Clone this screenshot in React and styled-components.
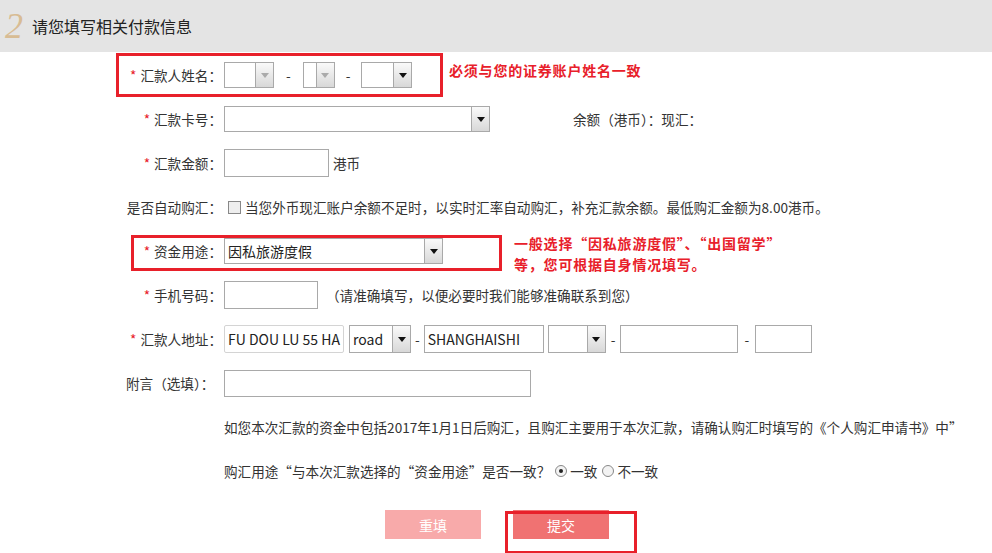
import React from "react";
import styled, { createGlobalStyle } from "styled-components";

const G = createGlobalStyle`
  body{margin:0;font-family:"Microsoft YaHei","Noto Sans CJK SC",sans-serif;font-size:13.6px;color:#333;background:#fff;}
`;
const Page = styled.div`position:relative;width:992px;height:553px;overflow:hidden;`;
const Header = styled.div`height:52px;background:#e4e4e4;display:flex;align-items:center;gap:9px;padding-left:5px;`;
const Num = styled.span`font-family:"Liberation Serif",serif;font-style:italic;font-size:36px;color:#d8bc94;line-height:1;`;
const Title = styled.span`font-size:16px;color:#222;`;
const Form = styled.div`display:flex;flex-direction:column;padding-top:1px;`;
const Row = styled.div`display:flex;align-items:center;height:${p => p.h || 44}px;`;
const Label = styled.div`width:98px;margin-left:124px;margin-right:2px;text-align:right;white-space:nowrap;flex:none;`;
const Star = styled.span`color:#e8202a;margin-right:4px;`;
const Box = styled.div`position:relative;width:${p => p.w}px;height:${p => p.h || 26}px;border:1px solid #a9a9a9;box-sizing:border-box;background:#fff;flex:none;display:flex;align-items:center;padding-left:3px;font-size:${p => p.fs || 13}px;color:#222;overflow:hidden;white-space:nowrap;${p => p.soft ? "border-color:#d4d4d4;border-radius:2px;" : ""}`;
const Arrow = styled.div`position:absolute;right:0;top:0;bottom:0;width:17px;border-left:1px solid #a9a9a9;background:linear-gradient(#fafafa,#d8d8d8);display:flex;align-items:center;justify-content:center;
  &::after{content:"";border-left:4px solid transparent;border-right:4px solid transparent;border-top:5px solid ${p => p.dis ? "#aaa" : "#111"};}`;
const Dash = styled.span`margin:0 ${p => p.m || 12}px;`;
const Gap = styled.span`width:${p => p.w}px;flex:none;`;
const Note = styled.div`color:#333;white-space:nowrap;`;
const Check = styled.span`width:11px;height:11px;border:1px solid #888;background:#eee;display:inline-block;margin:0 4px 0 4px;`;
const Radio = styled.span`width:10px;height:10px;border-radius:50%;border:1px solid #888;background:#f3f3f3;display:inline-flex;align-items:center;justify-content:center;margin:0 3px 0 5px;
  &::after{content:"";width:4px;height:4px;border-radius:50%;background:${p => p.on ? "#222" : "transparent"};}`;
const Buttons = styled.div`display:flex;gap:32px;margin-left:385px;margin-top:17px;`;
const Btn = styled.div`width:96px;height:29px;background:${p => p.c};color:#fff;display:flex;align-items:center;justify-content:center;font-size:14px;`;
const RedBox = styled.div`position:absolute;border:3px solid #e8202a;box-sizing:border-box;`;
const Hint = styled.div`position:absolute;color:#e8202a;font-weight:bold;font-size:14px;line-height:21px;letter-spacing:0.8px;`;

const Sel = ({ w, h, text, dis, fs }) => (
  <Box w={w} h={h} fs={fs}>{text}<Arrow dis={dis} /></Box>
);

export default function App() {
  return (
    <Page>
      <G />
      <Header><Num>2</Num><Title>请您填写相关付款信息</Title></Header>
      <Form>
        <Row><Label><Star>*</Star>汇款人姓名：</Label>
          <Sel w={50} dis /><Dash>-</Dash><Sel w={32} dis /><Dash m={11}>-</Dash><Sel w={51} /></Row>
        <Row><Label><Star>*</Star>汇款卡号：</Label><Sel w={266} h={26} />
          <Gap w={83} />余额（港币）：现汇：</Row>
        <Row><Label><Star>*</Star>汇款金额：</Label><Box w={105} h={28} /><Gap w={4} />港币</Row>
        <Row><Label>是否自动购汇：</Label><Check />当您外币现汇账户余额不足时，以实时汇率自动购汇，补充汇款余额。最低购汇金额为8.00港币。</Row>
        <Row><Label><Star>*</Star>资金用途：</Label><Sel w={219} h={26} text="因私旅游度假" fs={14} /></Row>
        <Row><Label><Star>*</Star>手机号码：</Label><Box w={94} h={28} /><Gap w={8} />（请准确填写，以便必要时我们能够准确联系到您）</Row>
        <Row><Label><Star>*</Star>汇款人地址：</Label>
          <Box w={120} h={28} soft fs={14}>FU DOU LU 55 HA</Box>
          <Gap w={5} />
          <Sel w={62} h={28} text="road" fs={14} /><Dash m={4}>-</Dash>
          <Box w={120} h={28} fs={14}>SHANGHAISHI</Box><Gap w={4} />
          <Sel w={58} h={28} /><Dash m={5}>-</Dash>
          <Box w={118} h={28} /><Dash m={6}>-</Dash><Box w={57} h={28} /></Row>
        <Row><Label style={{ textAlign: "left", marginLeft: 126, width: 96 }}>附言（选填）：</Label><Box w={307} h={27} /></Row>
        <Row><Gap w={224} /><Note>如您本次汇款的资金中包括2017年1月1日后购汇，且购汇主要用于本次汇款，请确认购汇时填写的《个人购汇申请书》中”</Note></Row>
        <Row><Gap w={224} /><Note>购汇用途“与本次汇款选择的“资金用途”是否一致？</Note><Radio on />一致<Radio />不一致</Row>
      </Form>
      <Buttons><Btn c="#f8aaaa">重填</Btn><Btn c="#f07272">提交</Btn></Buttons>
      <RedBox style={{ left: 116, top: 53, width: 327, height: 44 }} />
      <RedBox style={{ left: 131, top: 235, width: 371, height: 36 }} />
      <RedBox style={{ left: 505, top: 511, width: 132, height: 43 }} />
      <Hint style={{ left: 449, top: 60 }}>必须与您的证券账户姓名一致</Hint>
      <Hint style={{ left: 514, top: 233 }}>一般选择“因私旅游度假”、“出国留学”<br />等，您可根据自身情况填写。</Hint>
    </Page>
  );
}
